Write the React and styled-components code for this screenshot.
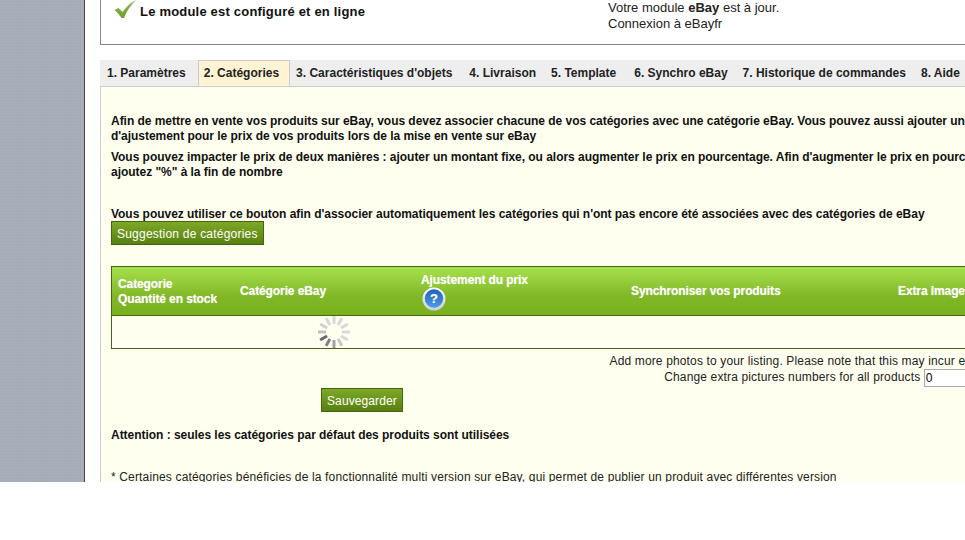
import React from "react";
import styled, { createGlobalStyle } from "styled-components";

const Global = createGlobalStyle`
  html, body { margin: 0; padding: 0; background: #fff; }
  body { font-family: "Liberation Sans", Arial, sans-serif; font-size: 12px; color: #111; }
`;
const Page = styled.div`
  display: flex; width: 965px; height: 482px; overflow: hidden; background: #fff;
`;
const Sidebar = styled.aside`
  flex: 0 0 84px;
  background: #a6aeb9;
  background-image: repeating-linear-gradient(90deg, rgba(255,255,255,.018) 0 1px, transparent 1px 3px),
    repeating-linear-gradient(0deg, rgba(0,0,0,.015) 0 1px, transparent 1px 3px);
  border-right: 1px solid #444;
`;
const Main = styled.main`
  flex: 0 0 1100px; padding-left: 15px; box-sizing: border-box;
`;
const Status = styled.section`
  display: flex; height: 44px;
  border-left: 1px solid #888; border-bottom: 1px solid #888;
`;
const StatusLeft = styled.div`
  flex: 0 0 507px; display: flex; align-items: flex-start; padding-left: 13px; box-sizing: border-box;
`;
const Check = styled.svg` flex: none; margin-right: 4px; `;
const StatusTitle = styled.strong`
  font-size: 13px; line-height: 15px; padding-top: 4px; color: #111; letter-spacing: .2px;
`;
const StatusRight = styled.div` font-size: 13px; line-height: 16px; color: #222; `;
const Tabs = styled.nav`
  display: flex; margin-top: 15px; height: 26px; background: #eee;
`;
const Tab = styled.div`
  padding: 0 ${p => p.$pr ?? 11}px 0 ${p => p.$pl ?? 6}px; line-height: 26px; font-weight: bold; font-size: 12px; white-space: nowrap; color: #222;
  ${p => p.$active && `background: #fff3d3; border: 1px solid #ccc; border-bottom: none; line-height: 25px; padding: 0 10px 0 5px;`}
`;
const Panel = styled.section`
  background: #ffffef; border-top: 1px solid #ccc; border-left: 1px solid #ccc;
  padding: 27px 0 0 10px; height: 400px; box-sizing: border-box;
  white-space: nowrap;
`;
const Strong = styled.p`
  margin: ${p => p.$mt || 0}px 0 ${p => p.$mb || 0}px; font-weight: bold; font-size: 12px; line-height: 15px; color: #111;
  letter-spacing: -.035px;
`;
const GreenButton = styled.button`
  display: block; height: 24px; padding: 1px 5px 0; font: 12px "Liberation Sans", Arial, sans-serif; color: #fff;
  background: linear-gradient(#7ea827, #57800f); border: 1px solid #466510; box-sizing: border-box;
  letter-spacing: ${p => p.$ls ?? 0.22}px;
  margin: ${p => p.$mt || 0}px 0 0 ${p => p.$ml || 0}px;
`;
const Table = styled.div`
  margin-top: 21px; border: 1px solid #4a6512; width: 1000px; box-sizing: border-box;
`;
const Head = styled.div`
  display: grid; grid-template-columns: 122px 181px 210px 267px auto; align-items: center;
  height: 49px; box-sizing: border-box; padding-left: 6px; border-bottom: 1px solid #4a6512;
  background: linear-gradient(#a7e04d, #82b828 60%, #78b01a);
  color: #fff; font-weight: bold; font-size: 12px; line-height: 15px; letter-spacing: -.1px;
  text-shadow: 0 0 1px rgba(255,255,255,.5);
`;
const HeadLabel = styled.div` padding-top: ${p => p.$pt || 0}px; `;
const HeadStack = styled.div` display: flex; flex-direction: column; align-items: flex-start; padding-top: 1px; `;
const Help = styled.svg` display: block; margin-top: -1px; margin-left: 1px; `;
const Body = styled.div`
  height: 32px; padding-left: 205px; display: flex; align-items: center;
`;
const Extra = styled.div`
  margin-top: 4px; width: 960px; text-align: center; line-height: 16px; font-size: 12px; color: #222;
  padding-left: 449px; box-sizing: border-box; letter-spacing: .145px;
`;
const Count = styled.input`
  width: 43px; height: 18px; box-sizing: border-box; padding: 0 1px; border: 1px solid #aaa; margin: 0;
  font: 12px "Liberation Sans", Arial, sans-serif; vertical-align: middle;
`;
const Foot = styled.p`
  margin: 27px 0 0; font-size: 12px; line-height: 15px; color: #222; letter-spacing: .15px;
`;

const SHADES = [0xd8, 0xd8, 0xd8, 0xd8, 0xd8, 0xc8, 0xa0, 0x80, 0x68, 0xc0, 0xd0, 0xd8];

function Spinner() {
  return (
    <svg width="34" height="34" viewBox="-17 -17 34 34" aria-hidden="true">
      {SHADES.map((s, i) => (
        <rect key={i} x="-1.5" y="-16" width="3" height="8" rx="0.5"
          fill={`rgb(${s},${s},${s})`} transform={`rotate(${i * 30})`} />
      ))}
    </svg>
  );
}

export default function App() {
  return (
    <Page>
      <Global />
      <Sidebar />
      <Main>
        <Status>
          <StatusLeft>
            <Check width="22" height="19" viewBox="0 0 22 19" aria-hidden="true">
              <defs>
                <linearGradient id="c" x1="0" y1="0" x2="0" y2="1">
                  <stop offset="0" stopColor="#8db84a" />
                  <stop offset="1" stopColor="#6f9f35" />
                </linearGradient>
              </defs>
              <path d="M0.5 10 L4.5 8 L8.5 12 C11.5 7.5 16 3 22 0 C17 5 12.5 11 10 18 L7.5 18 C5.5 15 3 12 0.5 10 Z" fill="url(#c)" />
            </Check>
            <StatusTitle>Le module est configuré et en ligne</StatusTitle>
          </StatusLeft>
          <StatusRight>Votre module <b>eBay</b> est à jour.<br />Connexion à eBayfr</StatusRight>
        </Status>
        <Tabs>
          <Tab $pl={7} $pr={12}>1. Paramètres</Tab>
          <Tab $active>2. Catégories</Tab>
          <Tab>3. Caractéristiques d'objets</Tab>
          <Tab $pr={9}>4. Livraison</Tab>
          <Tab $pr={12}>5. Template</Tab>
          <Tab $pr={9}>6. Synchro eBay</Tab>
          <Tab $pr={9}>7. Historique de commandes</Tab>
          <Tab>8. Aide</Tab>
        </Tabs>
        <Panel>
          <Strong $mb={6}>Afin de mettre en vente vos produits sur eBay, vous devez associer chacune de vos catégories avec une catégorie eBay. Vous pouvez aussi ajouter un prix<br />d'ajustement pour le prix de vos produits lors de la mise en vente sur eBay</Strong>
          <Strong $mb={27}>Vous pouvez impacter le prix de deux manières : ajouter un montant fixe, ou alors augmenter le prix en pourcentage. Afin d'augmenter le prix en pourcentage,<br />ajoutez "%" à la fin de nombre</Strong>
          <Strong>Vous pouvez utiliser ce bouton afin d'associer automatiquement les catégories qui n'ont pas encore été associées avec des catégories de eBay</Strong>
          <GreenButton $mt={-1}>Suggestion de catégories</GreenButton>
          <Table>
            <Head>
              <HeadLabel $pt={2}>Categorie<br />Quantité en stock</HeadLabel>
              <HeadLabel>Catégorie eBay</HeadLabel>
              <HeadStack>
                Ajustement du prix
                <Help width="24" height="24" viewBox="0 0 24 24" aria-hidden="true">
                  <defs>
                    <linearGradient id="q" x1="0" y1="0" x2="0" y2="1">
                      <stop offset="0" stopColor="#1f62b8" />
                      <stop offset="1" stopColor="#4f9ae6" />
                    </linearGradient>
                    <linearGradient id="r" x1="0" y1="0" x2="0" y2="1">
                      <stop offset="0" stopColor="#ffffff" />
                      <stop offset="1" stopColor="#c4ced8" />
                    </linearGradient>
                  </defs>
                  <circle cx="12" cy="12" r="11.5" fill="url(#r)" />
                  <circle cx="12" cy="11.5" r="9.2" fill="url(#q)" />
                  <text x="12" y="16" textAnchor="middle" fontSize="13" fontWeight="bold" fontFamily="Liberation Sans" fill="#fff">?</text>
                </Help>
              </HeadStack>
              <HeadLabel>Synchroniser vos produits</HeadLabel>
              <HeadLabel>Extra Images</HeadLabel>
            </Head>
            <Body><Spinner /></Body>
          </Table>
          <Extra>Add more photos to your listing. Please note that this may incur extra costs.<br />Change extra pictures numbers for all products <Count defaultValue="0" /></Extra>
          <GreenButton $ml={210} $mt={1} $ls={0.1}>Sauvegarder</GreenButton>
          <Strong $mt={16}>Attention : seules les catégories par défaut des produits sont utilisées</Strong>
          <Foot>* Certaines catégories bénéficies de la fonctionnalité multi version sur eBay, qui permet de publier un produit avec différentes version</Foot>
        </Panel>
      </Main>
    </Page>
  );
}
